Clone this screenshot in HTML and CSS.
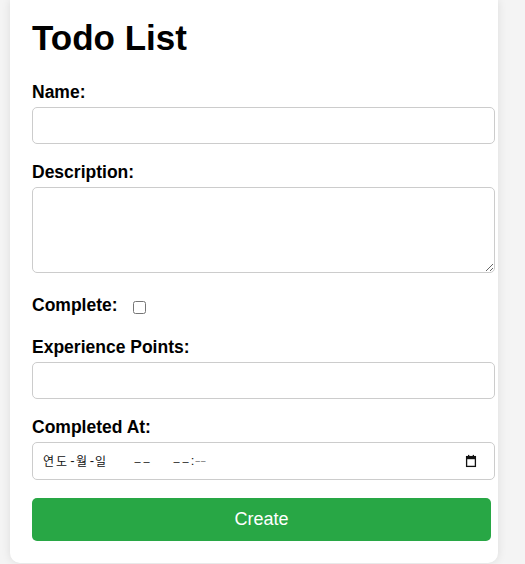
FILE: index.html
```html
<!DOCTYPE html>
<html lang="ko">
<head>
<meta charset="utf-8">
<title>Todo List</title>
<link rel="stylesheet" href="styles.css">
</head>
<body>
<div class="page">
  <div class="card">
    <h1 class="title">Todo List</h1>
    <form class="todo-form">
      <div class="group">
        <label class="label" for="name">Name:</label>
        <input class="field" id="name" type="text">
      </div>
      <div class="group group-area">
        <label class="label" for="desc">Description:</label>
        <textarea class="field area" id="desc"></textarea>
      </div>
      <div class="group check-row">
        <label class="label inline" for="complete">Complete:</label>
        <input class="checkbox" id="complete" type="checkbox">
      </div>
      <div class="group">
        <label class="label" for="xp">Experience Points:</label>
        <input class="field" id="xp" type="text">
      </div>
      <div class="group">
        <label class="label" for="done-at">Completed At:</label>
        <div class="field date-field" id="done-at">
          <span class="date-text"><span class="ch">연</span><span class="ch">도</span><span class="sep">-</span><span class="ch">월</span><span class="sep sep-b">-</span><span class="ch">일</span><span class="gap"></span><span class="dash">–</span><span class="dash">–</span><span class="gap2"></span><span class="dash">–</span><span class="dash">–</span><span class="colon">:</span><span class="dash sm">–</span><span class="dash sm">–</span></span>
          <svg class="cal" width="12" height="14" viewBox="0 0 12 14" aria-hidden="true">
            <rect x="1.6" y="2.6" width="8.8" height="9.8" fill="none" stroke="#111" stroke-width="1.3"/>
            <rect x="1.6" y="2.6" width="8.8" height="2.6" fill="#111"/>
            <rect x="3" y="0.9" width="1.3" height="2.4" fill="#111"/>
            <rect x="7.7" y="0.9" width="1.3" height="2.4" fill="#111"/>
          </svg>
        </div>
      </div>
      <button class="btn" type="button">Create</button>
    </form>
  </div>
</div>
</body>
</html>
```
FILE: styles.css
```css
html, body {
  margin: 0;
  padding: 0;
  background: #f4f4f4;
}

body {
  font-family: "Liberation Sans", Arial, sans-serif;
  color: #000;
}

.page {
  padding: 0 0 2px 10px;
}

.card {
  width: 488px;
  box-sizing: border-box;
  background: #fff;
  padding: 0 22px 22px;
  border-radius: 0 0 10px 10px;
  box-shadow: 0 0 10px rgba(0, 0, 0, 0.1);
}

.title {
  margin: 0 0 24px;
  padding-top: 18px;
  font-size: 35px;
  line-height: 40px;
  font-weight: bold;
}

.group {
  margin-bottom: 18px;
}

.label {
  display: block;
  font-size: 17.5px;
  line-height: 20px;
  font-weight: bold;
  margin-bottom: 5px;
}

.label.inline {
  display: inline-block;
  margin-right: 11px;
}

.field {
  display: block;
  box-sizing: border-box;
  width: calc(100% + 19px);
  height: 37px;
  padding: 10px;
  border: 1px solid #ccc;
  border-radius: 5px;
  background: #fff;
  font-family: "Liberation Sans", Arial, sans-serif;
  font-size: 13.33px;
}

.group-area {
  margin-bottom: 0;
}

.area {
  height: 86px;
  resize: vertical;
  margin-bottom: 22px;
}

.check-row {
  display: flex;
  align-items: flex-start;
  height: 26px;
  margin-bottom: 16px;
}

.checkbox {
  width: 13px;
  height: 13px;
  margin: 6px 0 0 4px;
}

.date-field {
  height: 38px;
  margin-top: 1px;
  display: flex;
  align-items: center;
  justify-content: space-between;
  padding: 0 17px 0 10px;
}

.date-text {
  display: flex;
  align-items: center;
  font-family: "Noto Sans CJK KR", "Liberation Sans", sans-serif;
  font-size: 12px;
  line-height: 16px;
  color: #111;
}

.ch {
  flex: none;
  width: 13px;
}

.sep {
  flex: none;
  width: 7px;
  text-align: center;
  font-family: "Liberation Sans", sans-serif;
  font-size: 13px;
}

.sep-b {
  width: 6px;
}

.gap {
  flex: none;
  width: 25px;
}

.gap2 {
  flex: none;
  width: 21px;
}

.dash {
  flex: none;
  width: 9px;
  text-align: center;
  font-family: "Liberation Sans", sans-serif;
  font-size: 11px;
}

.dash.sm {
  width: 5.5px;
  font-size: 8px;
}

.colon {
  flex: none;
  width: 5px;
  text-align: center;
  font-family: "Liberation Sans", sans-serif;
  font-size: 13px;
}

.cal {
  display: block;
}

.btn {
  display: block;
  width: calc(100% + 15px);
  height: 43px;
  margin-top: 18px;
  border: none;
  border-radius: 5px;
  background: #28a745;
  color: #fff;
  font-family: "Liberation Sans", Arial, sans-serif;
  font-size: 18px;
  cursor: pointer;
}
```
